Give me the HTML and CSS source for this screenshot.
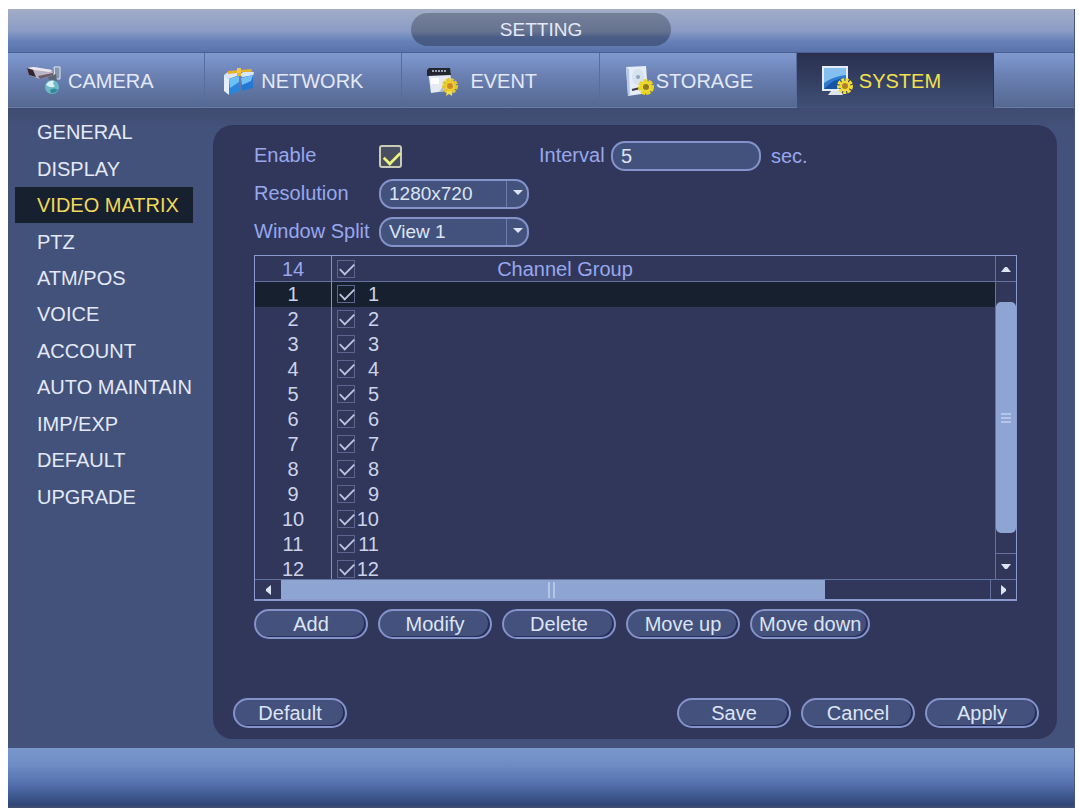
FILE: index.html
```html
<!DOCTYPE html>
<html lang="en">
<head>
    <meta charset="UTF-8">
    <meta name="viewport" content="width=device-width, initial-scale=1.0">
    <title>Setting - Video Matrix</title>
    <link rel="stylesheet" href="styles.css">
</head>
<body>
    <div class="window">
        <header class="titlebar">
            <h1 class="title">SETTING</h1>
        </header>

        <!-- Main tabs -->
        <nav class="tabs">
            <a href="#" class="tab tab-camera">
                <svg class="tab-icon" viewBox="0 0 36 34">
                    <path d="M1 4 L8 3 L26 6 L28 11 L14 15 L3 11 Z" fill="#b9b4c4"/>
                    <path d="M1 4 L8 3 L26 6 L24 8 L9 6 Z" fill="#ece8f2"/>
                    <path d="M1 4 L7 6 L10 13 L3 11 Z" fill="#33262f"/>
                    <path d="M12 12 L27 9 L27 11 L14 15 Z" fill="#6d5a68"/>
                    <path d="M28 3 h6 v12 h-5 z" fill="#8598ab" stroke="#dfe8f0" stroke-width="1"/>
                    <path d="M22 13 L30 10 L31 17 L24 18 Z" fill="#5d6676"/>
                    <circle cx="26" cy="23" r="7" fill="#6fb8c6"/>
                    <path d="M20 21 q3 -5 8 -4 q-2 3 1 5 q-3 3 -9 -1 z" fill="#d8f2f4"/>
                    <path d="M24 26 q4 -3 8 0 q-3 4 -7 3 z" fill="#2d8b95"/>
                </svg>
                <span>CAMERA</span>
            </a>
            <a href="#" class="tab tab-network">
                <svg class="tab-icon" viewBox="0 0 32 34">
                    <path d="M1 11 L5 8 L14 9 L14 12 L6 15 L1 14 Z" fill="#d9e6f5"/>
                    <path d="M17 10 L22 7 L31 8 L30 12 L19 13 Z" fill="#d9e6f5"/>
                    <path d="M1 13 L6 15 L6 31 L1 27 Z" fill="#e7eef8"/>
                    <path d="M6 15 L16 12 L17 27 L6 31 Z" fill="#2a86dd"/>
                    <path d="M6 15 L16 12 L16 18 L7 24 Z" fill="#6cc0f6"/>
                    <path d="M18 14 L30 11 L30 24 L19 27 Z" fill="#2478d2"/>
                    <path d="M18 14 L30 11 L28 17 L19 21 Z" fill="#73c1f4"/>
                    <path d="M5 7 L29 5 L28 8 L18 8 L18 12 L14 12 L14 9 L5 10 Z" fill="#e9b22c"/>
                    <path d="M14 4 h4 v5 h-4 z" fill="#f4c946"/>
                </svg>
                <span>NETWORK</span>
            </a>
            <a href="#" class="tab tab-event">
                <svg class="tab-icon" viewBox="0 0 32 34">
                    <path d="M2 7 L24 6 L26 26 L5 29 Z" fill="#e6e9f2"/>
                    <path d="M5 14 h8 v6 h-8 z" fill="#fff"/>
                    <path d="M13 28 L23 13 L26 26 Z" fill="#b4bfd6"/>
                    <path d="M1 6 L3 4 L24 4 L25 11 L1 12 Z" fill="#202530"/>
                    <path d="M6 7 H20" stroke="#9ca3b3" stroke-width="2" stroke-dasharray="2 1"/>
                    <circle cx="24" cy="22" r="6" fill="#f0d735"/>
                    <circle cx="24" cy="22" r="6" fill="none" stroke="#e5c62c" stroke-width="4" stroke-dasharray="3 1"/>
                    <circle cx="24" cy="22" r="3" fill="#cc8a27"/>
                    <path d="M21 27 l-1 5 l3 -2 l3 2 l0 -5 z" fill="#f3dc4d"/>
                </svg>
                <span>EVENT</span>
            </a>
            <a href="#" class="tab tab-storage">
                <svg class="tab-icon" viewBox="0 0 30 34">
                    <path d="M2 3 L22 2 L24 29 L4 32 Z" fill="#e5edf7"/>
                    <path d="M2 3 L5 5 L6 31 L4 32 Z" fill="#b9cbe4"/>
                    <ellipse cx="14" cy="13" rx="6" ry="8" fill="#d6e2ef"/>
                    <circle cx="14" cy="13" r="2" fill="#8ea5be"/>
                    <path d="M8 26 L16 24" stroke="#343d52" stroke-width="2"/>
                    <circle cx="22" cy="23" r="6" fill="#f0dc2a"/>
                    <circle cx="22" cy="23" r="6" fill="none" stroke="#ead526" stroke-width="4" stroke-dasharray="4 1"/>
                    <circle cx="22" cy="23" r="3" fill="#8e7a22"/>
                </svg>
                <span>STORAGE</span>
            </a>
            <a href="#" class="tab tab-system active">
                <svg class="tab-icon" viewBox="0 0 32 34">
                    <path d="M1 2 H27 V27 H1 Z" fill="#e4edf6"/>
                    <path d="M3 4 H25 V25 H3 Z" fill="#2c7bd0"/>
                    <path d="M3 4 H25 V11 Q13 12 3 19 Z" fill="#84bff0"/>
                    <path d="M3 25 Q13 14 25 14 V25 Z" fill="#1553a4"/>
                    <path d="M10 27 H20 L22 31 H7 Z" fill="#dde4ec"/>
                    <circle cx="24" cy="22" r="5" fill="#f3dc34"/>
                    <circle cx="24" cy="22" r="6" fill="none" stroke="#f3dc34" stroke-width="4" stroke-dasharray="3 1"/>
                    <circle cx="24" cy="22" r="3" fill="#b08028"/>
                </svg>
                <span>SYSTEM</span>
            </a>
            <div class="tab-rest"></div>
        </nav>

        <main class="content">
            <!-- Side menu -->
            <nav class="sidebar">
                <a href="#">GENERAL</a>
                <a href="#">DISPLAY</a>
                <a href="#" class="active">VIDEO MATRIX</a>
                <a href="#">PTZ</a>
                <a href="#">ATM/POS</a>
                <a href="#">VOICE</a>
                <a href="#">ACCOUNT</a>
                <a href="#">AUTO MAINTAIN</a>
                <a href="#">IMP/EXP</a>
                <a href="#">DEFAULT</a>
                <a href="#">UPGRADE</a>
            </nav>

            <form class="panel">
                <div class="fields">
                    <label for="enable">Enable</label>
                    <input type="checkbox" id="enable" class="check check-big" checked>
                    <label for="interval">Interval</label>
                    <input type="text" id="interval" class="field" value="5">
                    <span>sec.</span>
                </div>
                <div class="fields">
                    <label for="resolution">Resolution</label>
                    <div class="select">
                        <select id="resolution" class="field">
                            <option>1280x720</option>
                        </select>
                    </div>
                </div>
                <div class="fields">
                    <label for="split">Window Split</label>
                    <div class="select">
                        <select id="split" class="field">
                            <option>View 1</option>
                        </select>
                    </div>
                </div>

                <!-- Channel list -->
                <div class="list">
                    <div class="list-view">
                        <table>
                            <thead>
                                <tr>
                                    <th class="col-no">14</th>
                                    <th class="col-check"><input type="checkbox" class="check" aria-label="Select all" checked></th>
                                    <th class="col-group">Channel Group</th>
                                    <th></th>
                                </tr>
                            </thead>
                            <tbody>
                                <tr class="selected"><td>1</td><td colspan="3"><label><input type="checkbox" class="check" checked><span>1</span></label></td></tr>
                                <tr><td>2</td><td colspan="3"><label><input type="checkbox" class="check" checked><span>2</span></label></td></tr>
                                <tr><td>3</td><td colspan="3"><label><input type="checkbox" class="check" checked><span>3</span></label></td></tr>
                                <tr><td>4</td><td colspan="3"><label><input type="checkbox" class="check" checked><span>4</span></label></td></tr>
                                <tr><td>5</td><td colspan="3"><label><input type="checkbox" class="check" checked><span>5</span></label></td></tr>
                                <tr><td>6</td><td colspan="3"><label><input type="checkbox" class="check" checked><span>6</span></label></td></tr>
                                <tr><td>7</td><td colspan="3"><label><input type="checkbox" class="check" checked><span>7</span></label></td></tr>
                                <tr><td>8</td><td colspan="3"><label><input type="checkbox" class="check" checked><span>8</span></label></td></tr>
                                <tr><td>9</td><td colspan="3"><label><input type="checkbox" class="check" checked><span>9</span></label></td></tr>
                                <tr><td>10</td><td colspan="3"><label><input type="checkbox" class="check" checked><span>10</span></label></td></tr>
                                <tr><td>11</td><td colspan="3"><label><input type="checkbox" class="check" checked><span>11</span></label></td></tr>
                                <tr><td>12</td><td colspan="3"><label><input type="checkbox" class="check" checked><span>12</span></label></td></tr>
                            </tbody>
                        </table>
                    </div>
                    <div class="scroll-v">
                        <button type="button" class="arrow" aria-label="Scroll up"><svg viewBox="0 0 10 6"><path d="M0 6 L4 1 H6 L10 6 Z"/></svg></button>
                        <div class="track"></div>
                        <div class="thumb"></div>
                        <div class="track"></div>
                        <button type="button" class="arrow" aria-label="Scroll down"><svg viewBox="0 0 10 6"><path d="M0 0 H10 L6 5 H4 Z"/></svg></button>
                    </div>
                    <div class="scroll-h">
                        <button type="button" class="arrow" aria-label="Scroll left"><svg viewBox="0 0 6 10"><path d="M6 0 V10 L1 6 V4 Z"/></svg></button>
                        <div class="thumb"></div>
                        <div class="track"></div>
                        <button type="button" class="arrow" aria-label="Scroll right"><svg viewBox="0 0 6 10"><path d="M0 0 V10 L5 6 V4 Z"/></svg></button>
                    </div>
                </div>

                <div class="actions">
                    <button type="button" class="btn">Add</button>
                    <button type="button" class="btn">Modify</button>
                    <button type="button" class="btn">Delete</button>
                    <button type="button" class="btn">Move up</button>
                    <button type="button" class="btn">Move down</button>
                </div>

                <div class="bottom">
                    <button type="reset" class="btn">Default</button>
                    <button type="submit" class="btn btn-save">Save</button>
                    <button type="button" class="btn">Cancel</button>
                    <button type="button" class="btn">Apply</button>
                </div>
            </form>
        </main>

        <footer class="footer"></footer>
    </div>
</body>
</html>
```

FILE: styles.css
```css
* {
    box-sizing: border-box;
}
body {
    margin: 0;
    padding: 9px 4px 4px 8px;
    background: #fff;
    font-family: "Liberation Sans", Arial, sans-serif;
    font-size: 20px;
    line-height: 24px;
    color: #e3e9f8;
}
a {
    color: inherit;
    text-decoration: none;
}
button, input, select {
    font: inherit;
    color: inherit;
    margin: 0;
}
.window {
    display: flex;
    flex-direction: column;
    min-height: calc(100vh - 13px);
    background: #43527b;
    border-right: 1px solid #46558a;
}

/* Title bar */
.titlebar {
    display: flex;
    justify-content: center;
    height: 44px;
    padding-top: 4px;
    background: linear-gradient(#a3adc6, #8b9cc6 50%, #6681b8 75%, #5b73ac);
    border-bottom: 1px solid #4b5f94;
}
.title {
    width: 260px;
    height: 33px;
    margin: 0;
    border-radius: 17px;
    background: linear-gradient(#75809b, #66738f 55%, #495c86 75%, #475a85);
    font-size: 19px;
    font-weight: normal;
    line-height: 34px;
    text-align: center;
}

/* Tabs */
.tabs {
    display: grid;
    grid-template-columns: repeat(5, 37fr) 15fr;
    height: 55px;
}
.tab, .tab-rest {
    background: linear-gradient(#809ad0, #6b81b4 40%, #546890);
    border-bottom: 1px solid #6a7ba5;
}
.tab {
    display: flex;
    align-items: center;
    gap: 6px;
    padding-top: 2px;
    padding-left: 18px;
    border-right: 1px solid #586d9f;
}
.tab-icon {
    height: 34px;
    flex: none;
}
.tab-event {
    gap: 12px;
    padding-left: 24px;
}
.tab-storage {
    gap: 2px;
    padding-left: 24px;
}
.tab-system {
    padding-left: 24px;
}
.tab.active {
    background: linear-gradient(#29304f, #343f62 50%, #404f76);
    border-color: #2a3356;
    border-bottom-color: #43527b;
    color: #f3e04e;
}

/* Content */
.content {
    display: flex;
    flex: 1;
    padding: 6px 17px 9px 0;
    background: linear-gradient(#3f4b70, #43527b 20px);
}
.sidebar {
    display: grid;
    grid-template-rows: repeat(11, 1fr);
    flex: none;
    width: 205px;
    height: 401px;
    padding: 0 20px 0 7px;
}
.sidebar a {
    display: flex;
    align-items: center;
    padding-left: 22px;
    white-space: nowrap;
}
.sidebar .active {
    background: #17202f;
    color: #f0d95a;
}
.panel {
    display: flex;
    flex-direction: column;
    flex: 1;
    min-width: 0;
    margin-top: 11px;
    padding: 16px 40px 11px 41px;
    border-radius: 20px;
    background: #31375a;
}
.fields {
    display: grid;
    grid-template-columns: 125px 160px 72px 160px auto;
    align-items: center;
    height: 30px;
    margin-bottom: 8px;
    color: #97a8ee;
}
.fields label {
    padding-bottom: 3px;
}
.field {
    display: block;
    width: 150px;
    height: 30px;
    padding: 0 8px;
    border: 2px solid #8593cb;
    border-radius: 14px;
    background: #43527d;
    color: #dde4f5;
    appearance: none;
    outline: none;
}
.select {
    position: relative;
    width: 150px;
}
.select .field {
    padding-right: 24px;
    background: linear-gradient(#6d7cb0, #6d7cb0) right 20px top 0 / 1px 100% no-repeat #43527d;
    font-size: 19px;
}
.select::after {
    content: "";
    position: absolute;
    top: 11px;
    right: 6px;
    border: 5px solid transparent;
    border-top-color: #dde4f5;
    border-bottom: 0;
    pointer-events: none;
}

/* Check boxes */
.check {
    display: block;
    flex: none;
    width: 18px;
    height: 18px;
    border: 1px solid #5b658f;
    background: transparent;
    appearance: none;
}
.check:checked::after {
    content: "";
    display: block;
    width: 14px;
    height: 7px;
    margin: 2px 0 0 1px;
    border: solid #bdc6e0;
    border-width: 0 0 2px 2px;
    transform: rotate(-45deg) scale(0.9);
}
.check-big {
    width: 23px;
    height: 23px;
    border: 2px solid #c9cbb4;
    border-radius: 3px;
    background: #474f60;
}
.check-big:checked::after {
    width: 15px;
    height: 8px;
    margin: 4px 0 0 2px;
    border-color: #eef37e;
    border-width: 0 0 3px 3px;
}

/* Channel list */
.list {
    display: grid;
    grid-template-columns: 1fr 21px;
    grid-template-rows: 323px 20px;
    border: 1px solid #8c9ad0;
    border-bottom-width: 2px;
}
.list-view {
    overflow: hidden;
}
.list table {
    width: 100%;
    table-layout: fixed;
    border-collapse: separate;
    border-spacing: 0;
    line-height: 20px;
    color: #cbd3ea;
}
.list th, .list td {
    height: 25px;
    padding: 0;
    text-align: center;
}
.list th {
    height: 26px;
    border-bottom: 1px solid #66729f;
    font-weight: normal;
    color: #97a8ee;
}
.list td {
    padding-bottom: 2px;
}
.list th:first-child, .list td:first-child {
    border-right: 1px solid #8593cb;
}
.col-no {
    width: 77px;
}
.col-check {
    width: 26px;
}
.col-group {
    width: 414px;
}
.list .check {
    margin-left: 5px;
}
.list label {
    display: flex;
    align-items: center;
}
.list label span {
    width: 24px;
    text-align: right;
}
.list .selected td {
    background: #17202e;
}
.scroll-v {
    display: flex;
    flex-direction: column;
    border-left: 1px solid #66729f;
}
.scroll-h {
    display: flex;
    grid-column: 1 / 3;
    border-top: 1px solid #66729f;
}
.arrow {
    display: flex;
    align-items: center;
    justify-content: center;
    flex: none;
    padding: 0;
    border: 0 solid #66729f;
    background: none;
}
.arrow svg {
    fill: #dde4f5;
}
.scroll-v .arrow {
    height: 26px;
}
.scroll-v .arrow svg {
    width: 10px;
}
.scroll-v .arrow:first-child {
    border-bottom-width: 1px;
}
.scroll-v .arrow:last-child {
    border-top-width: 1px;
}
.scroll-h .arrow {
    width: 26px;
}
.scroll-h .arrow svg {
    height: 10px;
}
.scroll-h .arrow:last-child {
    border-left-width: 1px;
}
.track {
    flex: 20;
}
.thumb {
    display: flex;
    align-items: center;
    justify-content: center;
    background: #8ea4d2;
}
.thumb::after {
    content: "";
    width: 10px;
    height: 10px;
}
.scroll-v .thumb {
    flex: 231;
    border-radius: 5px;
}
.scroll-v .thumb::after {
    background: repeating-linear-gradient(#b4c7e6 0 2px, transparent 2px 4px);
}
.scroll-h .thumb {
    flex: 66;
}
.scroll-h .thumb::after {
    height: 16px;
    background: repeating-linear-gradient(90deg, #b4c7e6 0 2px, transparent 2px 5px);
}
.scroll-h .track {
    flex: 20;
}

/* Buttons */
.btn {
    min-width: 114px;
    height: 30px;
    padding: 0 7px;
    border: 2px solid #8593cb;
    border-radius: 15px;
    background: #43517c;
    box-shadow: inset -2px -1px 0 #262d58;
    color: #dde4f5;
    line-height: 24px;
    white-space: nowrap;
}
.actions, .bottom {
    display: flex;
    gap: 10px;
}
.actions {
    margin-top: 8px;
}
.bottom {
    margin: auto -22px 0 -21px;
}
.btn-save {
    margin-left: auto;
}

.footer {
    height: 60px;
    background: linear-gradient(#7b98cc, #6d8ac4 30%, #5470ae 60%, #2f4677 95%, #44506f);
}
```
